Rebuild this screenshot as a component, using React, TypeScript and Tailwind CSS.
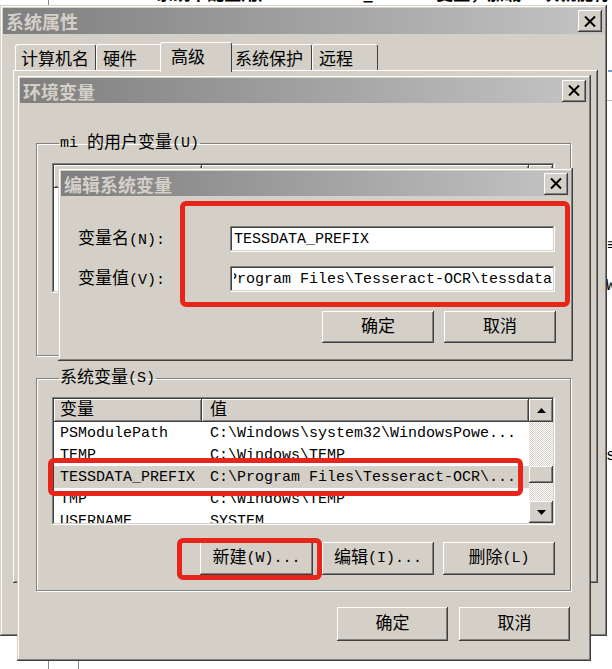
import React from "react";

const raised =
  "shadow-[inset_-1px_-1px_#404040,inset_1px_1px_#ffffff,inset_-2px_-2px_#808080,inset_2px_2px_#d4d0c8]";
const frame =
  "shadow-[inset_-1px_-1px_#404040,inset_1px_1px_#d4d0c8,inset_-2px_-2px_#808080,inset_2px_2px_#ffffff]";
const sunken =
  "shadow-[inset_-1px_-1px_#ffffff,inset_1px_1px_#808080,inset_-2px_-2px_#d4d0c8,inset_2px_2px_#404040]";
const etched = "border border-[#808080] shadow-[inset_1px_1px_#ffffff,1px_1px_#ffffff]";

// CJK runs are a bit larger than the latin monospace text
function K({ children }: { children: React.ReactNode }) {
  return <span className="text-[17px]">{children}</span>;
}

function CloseBtn() {
  return (
    <div className={`w-[24px] h-[22px] shrink-0 flex items-center justify-center bg-[#d4d0c8] ${raised}`}>
      <svg width="14" height="13" viewBox="0 0 14 13">
        <path d="M2 1.5 L12 11.5 M12 1.5 L2 11.5" stroke="#000" strokeWidth="2" />
      </svg>
    </div>
  );
}

function TitleBar({ title, className }: { title: string; className: string }) {
  return (
    <div className={`flex items-center justify-between pl-[3px] pr-[2px] bg-linear-to-r from-[#7f7f7f] to-[#c4c4c4] ${className}`}>
      <span className="text-[18px] font-bold leading-none text-[#d4d0c8] font-['Noto_Sans_CJK_SC',sans-serif]">
        {title}
      </span>
      <CloseBtn />
    </div>
  );
}

function Btn({ className, children }: { className: string; children: React.ReactNode }) {
  return (
    <div className={`flex items-center justify-center bg-[#d4d0c8] text-black ${raised} ${className}`}>{children}</div>
  );
}

function Tri({ up }: { up?: boolean }) {
  return (
    <svg width="9" height="5" viewBox="0 0 9 5">
      <path d={up ? "M0 5 L4.5 0 L9 5 Z" : "M0 0 L4.5 5 L9 0 Z"} fill="#000" />
    </svg>
  );
}

const rows = [
  ["PSModulePath", "C:\\Windows\\system32\\WindowsPowe..."],
  ["TEMP", "C:\\Windows\\TEMP"],
  ["TESSDATA_PREFIX", "C:\\Program Files\\Tesseract-OCR\\..."],
  ["TMP", "C:\\Windows\\TEMP"],
  ["USERNAME", "SYSTEM"],
];

function ListView({
  className,
  items,
  selected,
  hideHeader,
}: {
  className: string;
  items: string[][];
  selected?: number;
  hideHeader?: boolean;
}) {
  return (
    <div className={`bg-white p-[2px] flex ${sunken} ${className}`}>
      <div className="flex-1 flex flex-col overflow-hidden">
        <div className="flex h-[23px] shrink-0">
          <div className={`w-[148px] h-full bg-[#d4d0c8] pl-[6px] flex items-center ${raised}`}>
            {!hideHeader && <K>变量</K>}
          </div>
          <div className={`flex-1 h-full bg-[#d4d0c8] pl-[8px] flex items-center ${raised}`}>
            {!hideHeader && <K>值</K>}
          </div>
        </div>
        {items.map(([n, v], i) => (
          <div key={n} className={`flex h-[22px] shrink-0 items-center ${i === selected ? "bg-[#d4d0c8]" : ""}`}>
            <div className="w-[148px] pl-[6px] whitespace-nowrap">{n}</div>
            <div className="flex-1 pl-[8px] whitespace-nowrap">{v}</div>
          </div>
        ))}
      </div>
      <div className="w-[24px] flex flex-col">
        <div className={`h-[23px] bg-[#d4d0c8] flex items-center justify-center ${raised}`}>
          <Tri up />
        </div>
        <div className="flex-1 bg-[repeating-conic-gradient(#d4d0c8_0_25%,#ffffff_0_50%)] bg-[length:2px_2px]">
          <div className={`mt-[44px] h-[17px] bg-[#d4d0c8] ${raised}`} />
        </div>
        <div className={`h-[22px] bg-[#d4d0c8] flex items-center justify-center ${raised}`}>
          <Tri />
        </div>
      </div>
    </div>
  );
}

function Input({ children, end }: { children: React.ReactNode; end?: boolean }) {
  return (
    <div className={`w-[325px] h-[26px] bg-white pl-[4px] pr-[3px] flex items-center ${sunken}`}>
      <div className={`flex-1 flex overflow-hidden ${end ? "justify-end" : ""}`}>
        <span className="whitespace-nowrap shrink-0">{children}</span>
      </div>
    </div>
  );
}

export default function App() {
  return (
    <div className="relative w-[612px] h-[669px] bg-white overflow-hidden text-[15px] leading-none text-black font-['Liberation_Mono','Noto_Sans_CJK_SC',monospace]">
      {/* background document peeking out */}
      <div className="absolute left-[80px] top-[-16px] text-[17px] font-bold whitespace-nowrap font-['Noto_Sans_CJK_SC',sans-serif]">
        Windows系统下配置用户 TESSDATA_PREFIX 变量，加载 一次就能行
      </div>
      <div className="absolute left-[48px] top-0 h-[6px] w-px bg-[#888]" />
      <div className="absolute left-[48px] top-[660px] h-[9px] w-px bg-[#888]" />
      <div className="absolute left-[78px] top-[660px] h-[9px] w-px bg-[#888]" />
      <div className="absolute left-[608px] top-[70px] h-[2px] w-[4px] bg-[#7c9ad0]" />
      <div className="absolute left-[607px] top-[100px] h-px w-[5px] bg-[#bbb]" />
      <div className="absolute left-[607px] top-[238px] text-[16px] font-bold">≡</div>
      <div className="absolute left-[606px] top-[278px] text-[16px]">W</div>
      <div className="absolute left-[606px] top-[448px] text-[16px]">s</div>

      {/* 系统属性 */}
      <div className={`absolute left-0 top-[5px] w-[607px] h-[631px] bg-[#d4d0c8] p-[3px] ${frame}`}>
        <TitleBar title="系统属性" className="h-[26px]" />
        <div className="flex items-end h-[36px] pl-[12px] font-['Noto_Sans_CJK_SC',sans-serif] text-[17px]">
          <div className="w-[81px] h-[26px] pl-[5px] flex items-center border-t border-l border-white border-r border-r-[#404040] rounded-t-[3px]">计算机名</div>
          <div className="w-[66px] h-[26px] pl-[6px] flex items-center border-t border-l border-white border-r border-r-[#404040] rounded-t-[3px]">硬件</div>
          <div className="relative z-10 -mx-[2px] -mb-[2px] w-[72px] h-[30px] pl-[10px] pb-[4px] flex items-center bg-[#d4d0c8] border-t border-l border-white border-r border-r-[#404040] rounded-t-[3px]">高级</div>
          <div className="w-[82px] h-[26px] pl-[4px] flex items-center border-t border-l border-white border-r border-r-[#404040] rounded-t-[3px]">系统保护</div>
          <div className="w-[66px] h-[26px] pl-[6px] flex items-center border-t border-l border-white border-r border-r-[#404040] rounded-t-[3px]">远程</div>
        </div>
        <div className={`ml-[10px] w-[585px] h-[513px] ${raised}`} />
      </div>

      {/* 环境变量 */}
      <div className={`absolute left-[17px] top-[75px] w-[574px] h-[586px] bg-[#d4d0c8] p-[3px] ${frame}`}>
        <TitleBar title="环境变量" className="h-[25px]" />
        <fieldset className={`mt-[31px] ml-[16px] w-[534px] h-[222px] px-[15px] ${etched}`}>
          <legend className="ml-[7px] px-[1px] h-[18px] flex items-center">
            mi <span className="ml-[9px]"><K>的用户变量</K></span>(U)
          </legend>
          <ListView className="mt-[11px] h-[130px] w-[503px]" items={[]} hideHeader />
        </fieldset>
        <fieldset className={`mt-[13px] ml-[16px] w-[534px] h-[222px] px-[15px] ${etched}`}>
          <legend className="ml-[7px] px-[1px] h-[18px] flex items-center">
            <K>系统变量</K>(S)
          </legend>
          <ListView className="mt-[10px] h-[128px] w-[503px]" items={rows} selected={2} />
          <div className="mt-[17px] flex justify-end gap-[9px]">
            <Btn className="w-[113px] h-[33px]"><K>新建</K>(W)...</Btn>
            <Btn className="w-[112px] h-[33px]"><K>编辑</K>(I)...</Btn>
            <Btn className="w-[112px] h-[33px]"><K>删除</K>(L)</Btn>
          </div>
        </fieldset>
        <div className="mt-[16px] mr-[18px] flex justify-end gap-[11px]">
          <Btn className="w-[111px] h-[34px]"><K>确定</K></Btn>
          <Btn className="w-[111px] h-[34px]"><K>取消</K></Btn>
        </div>
      </div>

      {/* 编辑系统变量 */}
      <div className={`absolute left-[58px] top-[168px] w-[515px] h-[193px] bg-[#d4d0c8] p-[3px] ${frame}`}>
        <TitleBar title="编辑系统变量" className="h-[25px]" />
        <div className="mt-[30px] pl-[17px] flex items-center">
          <div className="w-[152px]"><K>变量名</K>(N):</div>
          <Input>TESSDATA_PREFIX</Input>
        </div>
        <div className="mt-[14px] pl-[17px] flex items-center">
          <div className="w-[152px]"><K>变量值</K>(V):</div>
          <Input end>C:\Program Files\Tesseract-OCR\tessdata</Input>
        </div>
        <div className="mt-[19px] mr-[14px] flex justify-end gap-[10px]">
          <Btn className="w-[112px] h-[32px]"><K>确定</K></Btn>
          <Btn className="w-[112px] h-[32px]"><K>取消</K></Btn>
        </div>
      </div>

      {/* red annotation boxes */}
      <div className="absolute left-[180px] top-[201px] w-[390px] h-[106px] border-[5px] border-[#e8251b] rounded-[6px]" />
      <div className="absolute left-[48px] top-[458px] w-[475px] h-[38px] border-[5px] border-[#e8251b] rounded-[6px]" />
      <div className="absolute left-[177px] top-[538px] w-[145px] h-[42px] border-[5px] border-[#e8251b] rounded-[6px]" />
    </div>
  );
}
